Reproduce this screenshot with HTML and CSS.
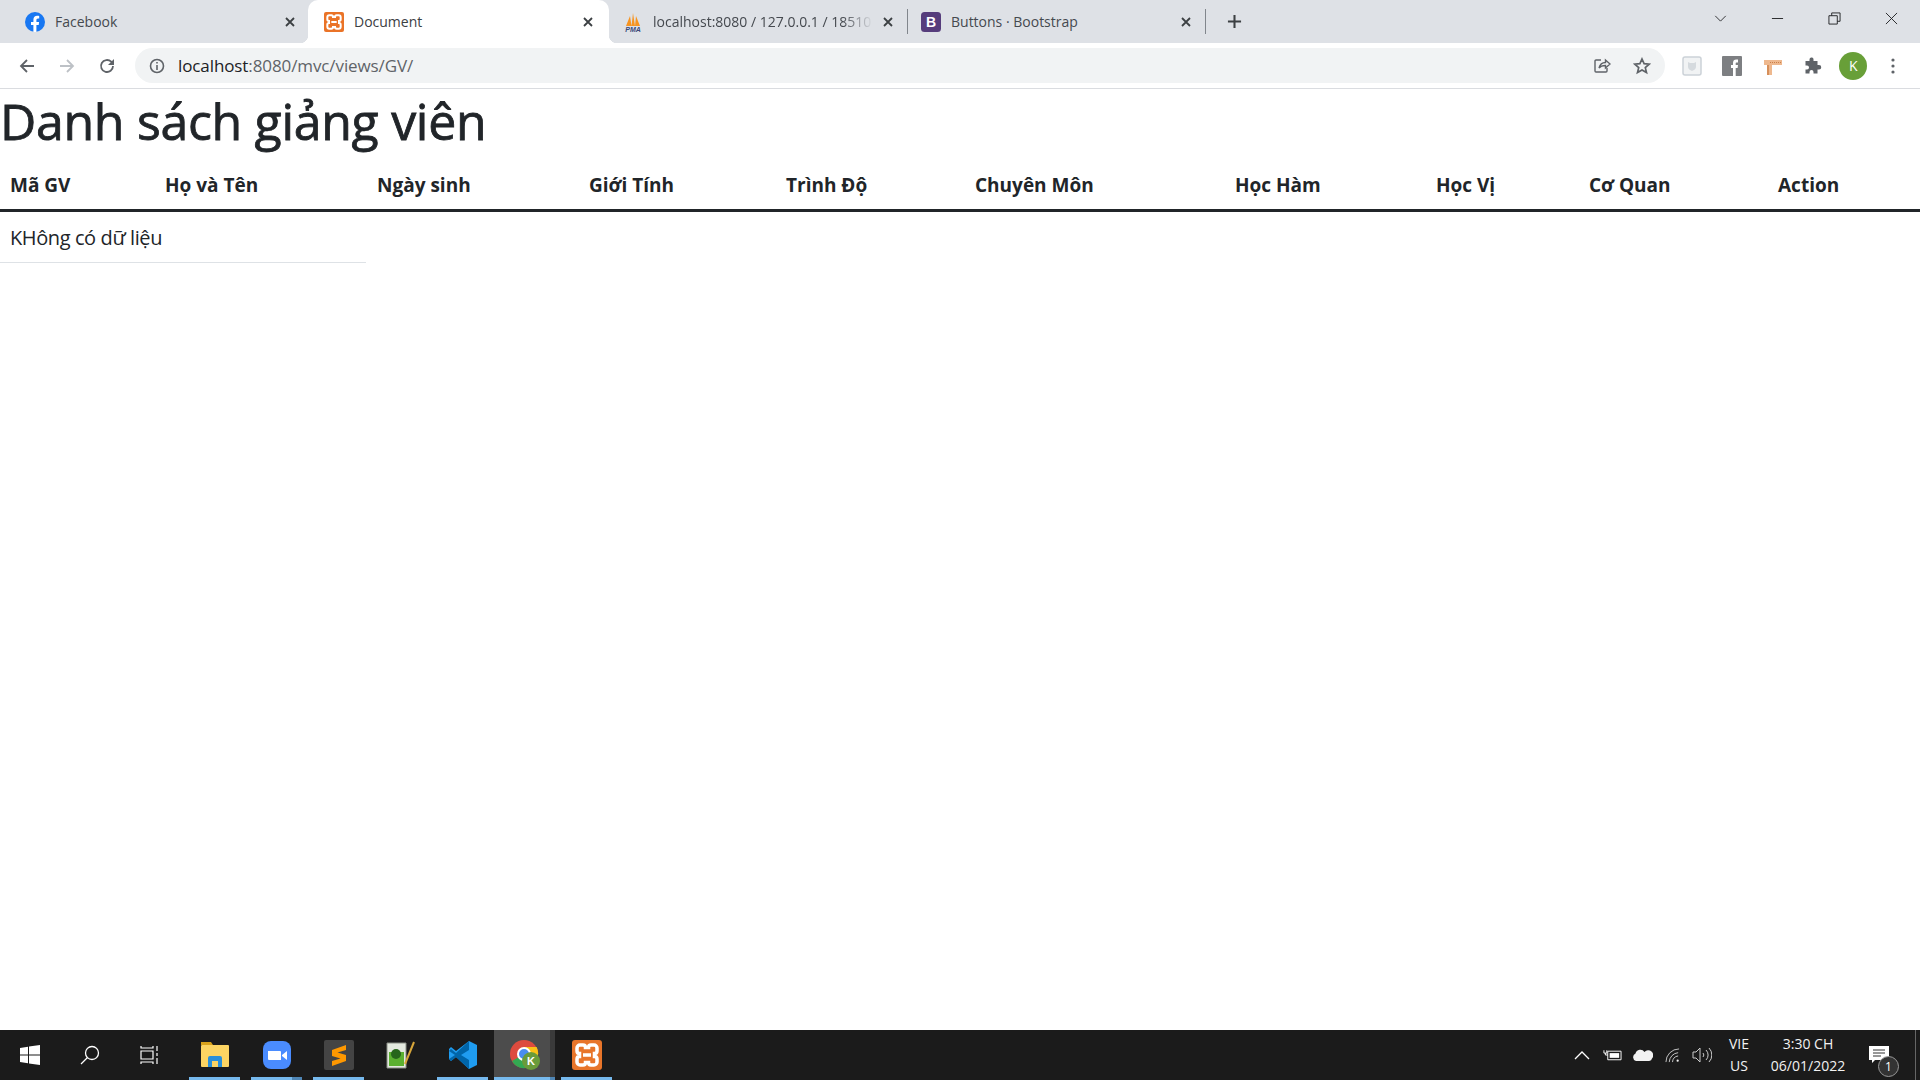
FILE: index.html
```html
<!DOCTYPE html>
<html lang="vi">
<head>
    <meta charset="UTF-8">
    <title>Document</title>
    <link rel="stylesheet" href="styles.css">
</head>
<body>
<div class="chrome">
    <div class="tabstrip">
        <div class="tab">
            <svg class="fav" viewBox="0 0 20 20"><circle cx="10" cy="10" r="10" fill="#1877f2"/><path d="M8.4 20v-7H6v-3h2.400V7.700c0-2.500 1.500-3.900 3.700-3.900 1.100 0 2.100.2 2.100.2v2.400h-1.200c-1.200 0-1.600.8-1.600 1.500V10h2.700l-.4 3h-2.300v7z" fill="#fff"/></svg>
            <span class="tab-title">Facebook</span>
            <svg class="tab-x" viewBox="0 0 10 10"><path d="M1 1l8 8M9 1l-8 8"/></svg>
        </div>
        <div class="tab active">
            <svg class="fav" viewBox="0 0 30 30"><rect width="30" height="30" rx="3" fill="#ea7327"/><path class="xampp" d="M8 5h3c1.500 0 2.500 1 2.500 2.500h3C16.500 6 17.500 5 19 5h3a3 3 0 0 1 3 3v3c0 1.500-1 2.500-2.500 2.500v3c1.500 0 2.500 1 2.500 2.500v3a3 3 0 0 1-3 3h-3c-1.500 0-2.500-1-2.500-2.500h-3c0 1.500-1 2.500-2.500 2.500H8a3 3 0 0 1-3-3v-3c0-1.500 1-2.500 2.500-2.500v-3C6 13.500 5 12.500 5 11V8a3 3 0 0 1 3-3zM11 15h8"/></svg>
            <span class="tab-title">Document</span>
            <svg class="tab-x" viewBox="0 0 10 10"><path d="M1 1l8 8M9 1l-8 8"/></svg>
        </div>
        <div class="tab">
            <svg class="fav" viewBox="0 0 20 20"><path d="M3 14L7 4l1.500 10zM8.500 14L10 1l2 13zM12 14l1-10 4 10z" fill="#f79421"/><text x="10" y="19.500" class="pma">PMA</text></svg>
            <span class="tab-title fade">localhost:8080 / 127.0.0.1 / 18510</span>
            <svg class="tab-x" viewBox="0 0 10 10"><path d="M1 1l8 8M9 1l-8 8"/></svg>
        </div>
        <div class="sep"></div>
        <div class="tab">
            <svg class="fav" viewBox="0 0 20 20"><rect width="20" height="20" rx="3.500" fill="#563d7c"/><text x="10" y="15" class="bs">B</text></svg>
            <span class="tab-title">Buttons · Bootstrap</span>
            <svg class="tab-x" viewBox="0 0 10 10"><path d="M1 1l8 8M9 1l-8 8"/></svg>
        </div>
        <div class="sep"></div>
        <svg class="newtab" viewBox="0 0 16 16"><path d="M8 1v14M1 8h14"/></svg>
        <div class="win-btns">
            <svg class="win chev" viewBox="0 0 14 8"><path d="M1 1l6 6 6-6"/></svg>
            <svg class="win" viewBox="0 0 14 14"><path d="M1 7h12"/></svg>
            <svg class="win" viewBox="0 0 14 14"><path d="M1 4h9v9H1zM4 4V1h9v9h-3"/></svg>
            <svg class="win" viewBox="0 0 14 14"><path d="M1 1l12 12M13 1L1 13"/></svg>
        </div>
    </div>
    <div class="toolbar">
        <svg class="nav" viewBox="0 0 16 16"><path d="M15 8H2M8 2L2 8l6 6"/></svg>
        <svg class="nav off" viewBox="0 0 16 16"><path d="M1 8h13M8 2l6 6-6 6"/></svg>
        <svg class="nav" viewBox="0 0 16 16"><path d="M14 8a6 6 0 1 1-1.800-4.300L14 5.500"/><path class="solid" d="M15 1v6H9z"/></svg>
        <div class="omnibox">
            <svg class="info" viewBox="0 0 16 16"><circle cx="8" cy="8" r="6.500"/><path d="M8 7v5M8 4v1.600"/></svg>
            <span class="url"><b>localhost</b>:8080/mvc/views/GV/</span>
            <svg class="omni-ic" viewBox="0 0 18 18"><path d="M8 3H3a1 1 0 0 0-1 1v10a1 1 0 0 0 1 1h10a1 1 0 0 0 1-1v-3"/><path d="M6 11c1-4 4-5.500 6.500-5.500V3L17 7l-4.500 4V8.500C10 8.500 7.500 9 6 11z"/></svg>
            <svg class="omni-ic star" viewBox="0 0 18 18"><path d="M9 2l2.100 4.700 5.100.5-3.900 3.400 1.200 5L9 13l-4.500 2.600 1.200-5L1.800 7.200l5.100-.5z"/></svg>
        </div>
        <div class="ext-row">
            <svg class="ext" viewBox="0 0 20 20"><rect x="1" y="1" width="18" height="18" rx="2" fill="#f1f3f4" stroke="#ccd2d8" stroke-width="1.500"/><path d="M6 6l2 1h4l2-1v5c0 2-2 3-4 4-2-1-4-2-4-4z" fill="#d5dade"/></svg>
            <svg class="ext" viewBox="0 0 20 20"><rect width="20" height="20" rx="1" fill="#7d7f82"/><path d="M11 20v-8H9V9h2V7c0-2.500 1.300-3.500 3.200-3.500H16v3h-1.300c-.8 0-1 .4-1 1V9H16l-.4 3h-1.900v8z" fill="#fff"/></svg>
            <svg class="ext" viewBox="0 0 20 20"><path d="M1 4h18v5H9v10H4V9H1z" fill="#eeb88e"/><path d="M4 9h2v10H4z" fill="#d68f5a"/><path d="M7 6.500h11" stroke="#c97f48" stroke-dasharray="1 1"/></svg>
            <svg class="ext" viewBox="0 0 20 20"><path class="puzzle" d="M8 1.500a2 2 0 0 1 2.500 2V5h4v4h1.500a2 2 0 0 1 0 4.500h-1.500v4h-4V16a2 2 0 0 0-4 0v1.500h-4v-4H4a2 2 0 0 0 0-4H2.500V5h4V3.500A2 2 0 0 1 8 1.500z"/></svg>
            <div class="avatar">K</div>
            <svg class="dots" viewBox="0 0 4 16"><circle cx="2" cy="2" r="1.600"/><circle cx="2" cy="8" r="1.600"/><circle cx="2" cy="14" r="1.600"/></svg>
        </div>
    </div>
</div>

<main class="page">
    <h1>Danh sách giảng viên</h1>
    <table class="list">
        <colgroup>
            <col class="c1"><col class="c2"><col class="c3"><col class="c4"><col class="c5">
            <col class="c6"><col class="c7"><col class="c8"><col class="c9"><col class="c10">
        </colgroup>
        <thead>
            <tr>
                <th>Mã GV</th><th>Họ và Tên</th><th>Ngày sinh</th><th>Giới Tính</th><th>Trình Độ</th>
                <th>Chuyên Môn</th><th>Học Hàm</th><th>Học Vị</th><th>Cơ Quan</th><th>Action</th>
            </tr>
        </thead>
    </table>
    <div class="empty">KHông có dữ liệu</div>
</main>

<div class="taskbar">
    <svg class="sys" viewBox="0 0 20 20"><path d="M0 3l8-1.200V9.500H0zM9 1.600L20 0v9.500H9zM0 10.500h8v7.700L0 17zM9 10.500h11V20L9 18.400z" fill="#fff"/></svg>
    <svg class="sys" viewBox="0 0 20 20"><circle cx="12" cy="8" r="6.500" fill="none" stroke="#fff" stroke-width="1.300"/><path d="M7.500 12.500L1 19" stroke="#fff" stroke-width="1.300"/></svg>
    <svg class="sys" viewBox="0 0 20 20"><path d="M1 1v2h12V1M1 19v-2h12v2M1 6h12v8H1zM17 1v5M17 8v3M17 13v6" fill="none" stroke="#fff" stroke-width="1.200"/></svg>
    <div class="apps">
        <div class="app run">
            <svg viewBox="0 0 30 30"><path d="M1 2h10l2 3H1z" fill="#d9a21b"/><rect x="1" y="5" width="28" height="22" rx="1" fill="#fcd462"/><path d="M8 27v-9a2 2 0 0 1 2-2h10a2 2 0 0 1 2 2v9h-4v-6h-6v6z" fill="#2a8fd8"/></svg>
        </div>
        <div class="app run split">
            <svg viewBox="0 0 30 30"><rect x="1" y="1" width="28" height="28" rx="8" fill="#4a8cff"/><path d="M6 11h12a1 1 0 0 1 1 1v8H7a1 1 0 0 1-1-1z" fill="#fff"/><path d="M20 15l5-4v9l-5-4z" fill="#fff"/></svg>
        </div>
        <div class="app run">
            <svg viewBox="0 0 30 30"><rect width="30" height="30" rx="2" fill="#444"/><path d="M22 5L8 10v6l8.500 2.500L8 21v5l14-5v-6l-8.500-2.500L22 10z" fill="#ff9800"/></svg>
        </div>
        <div class="app">
            <svg viewBox="0 0 30 30"><path d="M1 3h19v25H1z" fill="#e4e9df" stroke="#8a8f86"/><path d="M3 12h15v14H3z" fill="#5bb030"/><circle cx="10" cy="14" r="5" fill="#26651b"/><path d="M19 24L28 2" stroke="#d8a63a" stroke-width="2"/></svg>
        </div>
        <div class="app run narrow">
            <svg viewBox="0 0 30 30"><path d="M21 1l8 4v20l-8 4-13-12-5 4-2-2v-10l2-2 5 4z" fill="#1f9cf0"/><path d="M21 1v9l-8 5 8 5v9L8 17l-5 4-2-2 6-4-6-4 2-2 5 4z" fill="#0065a9"/></svg>
        </div>
        <div class="app run current split">
            <svg viewBox="0 0 30 30"><circle cx="14" cy="14" r="14" fill="#dd4b3e"/><path d="M14 14L2 21a14 14 0 0 0 14 7z" fill="#33a852"/><path d="M14 7h12.600A14 14 0 0 1 20 26z" fill="#fbc116"/><circle cx="14" cy="14" r="6" fill="#4a8df0" stroke="#fff" stroke-width="2"/><circle cx="21" cy="21" r="9" fill="#6a9b3a"/><text x="21" y="25" class="k">K</text></svg>
        </div>
        <div class="app run">
            <svg viewBox="0 0 30 30"><rect width="30" height="30" rx="3" fill="#e8752a"/><path class="xampp thick" d="M8 5h3c1.500 0 2.500 1 2.500 2.500h3C16.500 6 17.500 5 19 5h3a3 3 0 0 1 3 3v3c0 1.500-1 2.500-2.500 2.500v3c1.500 0 2.500 1 2.500 2.500v3a3 3 0 0 1-3 3h-3c-1.500 0-2.500-1-2.500-2.500h-3c0 1.500-1 2.500-2.500 2.500H8a3 3 0 0 1-3-3v-3c0-1.500 1-2.500 2.500-2.500v-3C6 13.500 5 12.500 5 11V8a3 3 0 0 1 3-3zM11 15h8"/></svg>
        </div>
    </div>
    <div class="tray">
        <svg class="tray-ic up" viewBox="0 0 16 9"><path d="M1 8l7-7 7 7"/></svg>
        <svg class="tray-ic batt" viewBox="0 0 20 12"><path d="M1 1v3h3V1M2.500 4v2H5M5 2h14v9H5z"/><path class="solid" d="M7 4h10v5H7z"/></svg>
        <svg class="tray-ic cloud" viewBox="0 0 21 12"><path class="solid-w" d="M4 12a4 4 0 0 1-.5-7.500A5 5 0 0 1 12.500 3 4.500 4.500 0 0 1 20 9.500 3 3 0 0 1 17 12z"/></svg>
        <svg class="tray-ic wifi" viewBox="0 0 16 16"><path d="M1 15A14 14 0 0 1 15 1M4.500 15A10.500 10.500 0 0 1 14 5M8 15a7 7 0 0 1 6-6.500"/><circle class="solid-w" cx="13.500" cy="13.500" r="1.200"/></svg>
        <svg class="tray-ic vol" viewBox="0 0 20 16"><path d="M1 5h3l4-4v14l-4-4H1zM11 6a3 3 0 0 1 0 4M14 3a7 7 0 0 1 0 10M17 1a10 10 0 0 1 0 14"/></svg>
        <div class="lang"><span>VIE</span><span>US</span></div>
        <div class="clock"><span>3:30 CH</span><span>06/01/2022</span></div>
        <div class="notif">
            <svg viewBox="0 0 20 18"><path d="M0 0h20v14H6l-3 3v-3H0z" fill="#fff"/><path d="M4 4h12M4 7h12M4 10h8" stroke="#333"/></svg>
            <span class="badge">1</span>
        </div>
        <div class="desk"></div>
    </div>
</div>
</body>
</html>
```

FILE: styles.css
```css
*{
    box-sizing: border-box;
}
html,body{
    height: 100%;
}
body{
    margin: 0;
    display: flex;
    flex-direction: column;
    background: #fff;
    color: #212529;
    font-family: "Open Sans", "Noto Sans", sans-serif;
    overflow: hidden;
}

/* browser top */
.chrome{
    flex: none;
}
.tabstrip{
    height: 43px;
    background: #dee1e6;
    display: flex;
    align-items: center;
    padding-left: 9px;
}
.tab{
    position: relative;
    width: 299px;
    align-self: stretch;
    display: flex;
    align-items: center;
    padding: 0 13px 0 16px;
    color: #45494f;
    font-size: 14px;
    flex: none;
}
.tab.active{
    width: 301px;
    margin-right: -2px;
    padding-right: 16px;
    background: #fff;
    color: #3c4043;
    border-radius: 10px 10px 0 0;
}
.tab.active::before,
.tab.active::after{
    content: "";
    position: absolute;
    bottom: 0;
    width: 8px;
    height: 8px;
}
.tab.active::before{
    left: -8px;
    background: radial-gradient(circle at 0 0, transparent 8px, #fff 8.500px);
}
.tab.active::after{
    right: -8px;
    background: radial-gradient(circle at 100% 0, transparent 8px, #fff 8.500px);
}
.fav{
    width: 20px;
    height: 20px;
    flex: none;
    margin-right: 10px;
}
.xampp{
    fill: none;
    stroke: #fff;
    stroke-width: 3;
}
.xampp.thick{
    stroke-width: 3.500;
}
.pma{
    font: italic bold 7px "Liberation Sans", sans-serif;
    fill: #3b4a7a;
    text-anchor: middle;
}
.bs{
    font: bold 14px "Liberation Sans", sans-serif;
    fill: #fff;
    text-anchor: middle;
}
.tab-title{
    flex: 1;
    white-space: nowrap;
    overflow: hidden;
    margin-bottom: 1px;
}
.tab-title.fade{
    -webkit-mask-image: linear-gradient(to right, #000 86%, transparent);
    mask-image: linear-gradient(to right, #000 86%, transparent);
}
.tab-x{
    width: 10px;
    height: 10px;
    flex: none;
    margin-left: 10px;
    fill: none;
    stroke: #3c4043;
    stroke-width: 1.800;
}
.sep{
    width: 1px;
    height: 25px;
    background: #81868c;
    flex: none;
    margin: 0 -3px 0 1px;
}
.newtab{
    width: 15px;
    height: 15px;
    margin-left: 24px;
    fill: none;
    stroke: #3c4043;
    stroke-width: 2.200;
}
.win-btns{
    margin-left: auto;
    display: flex;
    align-items: center;
    align-self: flex-start;
    height: 36px;
    padding-right: 22px;
    gap: 44px;
}
.win{
    width: 13px;
    height: 13px;
    fill: none;
    stroke: #202124;
    stroke-width: 1;
}
.win.chev{
    height: 7px;
}

.toolbar{
    height: 46px;
    display: flex;
    align-items: center;
    padding-left: 19px;
    border-bottom: 1px solid #dadce0;
}
.nav{
    width: 16px;
    height: 16px;
    margin-right: 24px;
    flex: none;
    fill: none;
    stroke: #5f6368;
    stroke-width: 1.800;
}
.nav.off{
    stroke: #bdc1c6;
}
.nav .solid{
    fill: #5f6368;
    stroke: none;
}
.omnibox{
    width: 1530px;
    height: 35px;
    margin-left: -4px;
    background: #f1f3f4;
    border-radius: 18px;
    display: flex;
    align-items: center;
    padding: 0 14px;
    flex: none;
}
.info{
    width: 16px;
    height: 16px;
    fill: none;
    stroke: #5f6368;
    stroke-width: 1.600;
    margin-right: 13px;
}
.url{
    flex: 1;
    font-size: 17px;
    color: #5f6368;
    letter-spacing: -.1px;
}
.url b{
    font-weight: 400;
    color: #202124;
}
.omni-ic{
    width: 18px;
    height: 18px;
    fill: none;
    stroke: #5f6368;
    stroke-width: 1.400;
    margin-left: 22px;
}
.omni-ic.star{
    stroke-width: 1.700;
}
.ext-row{
    display: flex;
    align-items: center;
    margin-left: 17px;
}
.ext{
    width: 20px;
    height: 20px;
    margin-right: 20.300px;
    flex: none;
}
.puzzle{
    fill: #5f6368;
}
.avatar{
    width: 28px;
    height: 28px;
    border-radius: 50%;
    background: #689f38;
    color: #fff;
    font-size: 14px;
    line-height: 28px;
    text-align: center;
    margin: 0 24px 0 -4px;
}
.dots{
    width: 4px;
    height: 16px;
    fill: #5f6368;
}

/* page */
.page{
    flex: 1;
    min-height: 0;
}
h1{
    margin: 0 0 8px;
    font-size: 50px;
    line-height: 64px;
    font-weight: 500;
    letter-spacing: -.3px;
    -webkit-text-stroke: .8px #212529;
}
.list{
    width: 100%;
    border-collapse: collapse;
    table-layout: fixed;
}
.list th{
    padding: 10px 10px 10px;
    text-align: left;
    font-size: 19px;
    line-height: 28px;
    font-weight: 700;
    border-bottom: 3px solid #212529;
}
.c1{ width: 155px; }
.c2,.c3{ width: 212px; }
.c4{ width: 197px; }
.c5,.c9{ width: 189px; }
.c6{ width: 260px; }
.c7{ width: 201px; }
.c8{ width: 153px; }
.c10{ width: 152px; }
.empty{
    width: 366px;
    padding: 12px 10px 10px;
    font-size: 20px;
    line-height: 28px;
    letter-spacing: -.4px;
    border-bottom: 1px solid #dee2e6;
}

/* taskbar */
.taskbar{
    flex: none;
    height: 50px;
    background: #1b1b1b;
    display: flex;
    align-items: center;
    padding-left: 20px;
    color: #fff;
}
.sys{
    width: 20px;
    height: 20px;
    margin-right: 40px;
    flex: none;
}
.apps{
    display: flex;
    height: 100%;
    margin-left: -11px;
}
.app{
    width: 51px;
    height: 100%;
    margin-right: 11px;
    padding-top: 10px;
    display: flex;
    justify-content: center;
}
.app.narrow{
    margin-right: 6px;
}
.app svg{
    width: 30px;
    height: 30px;
}
.app.run{
    background: linear-gradient(#76b9ed, #76b9ed) bottom / 100% 3px no-repeat;
}
.app.run.split{
    background: linear-gradient(to right, #76b9ed 80%, #4f86b5 80%) bottom / 100% 3px no-repeat;
}
.app.current{
    width: 61px;
    margin-right: 6px;
}
.app.run.current{
    background:
        linear-gradient(to right, #76b9ed 92%, #4f86b5 92%) bottom / 100% 3px no-repeat,
        linear-gradient(to right, #4c4c4c 92%, #3a3a3a 92%);
}
.k{
    font: bold 11px "Liberation Sans", sans-serif;
    fill: #fff;
    text-anchor: middle;
}
.tray{
    margin-left: auto;
    display: flex;
    align-items: center;
    height: 100%;
}
.tray-ic{
    fill: none;
    stroke: #fff;
    stroke-width: 1;
    flex: none;
}
.tray-ic.up{ width: 16px; height: 9px; margin-right: 13px; stroke-width: 1.300; }
.tray-ic.batt{ width: 19px; height: 12px; margin-right: 10px; }
.tray-ic.cloud{ width: 21px; height: 12px; margin-right: 12px; }
.tray-ic.wifi{ width: 15px; height: 15px; margin-right: 12px; stroke: #ccc; }
.tray-ic.vol{ width: 20px; height: 16px; margin-right: 12px; stroke: #ccc; }
.tray-ic .solid{ fill: #fff; stroke: none; }
.tray-ic .solid-w{ fill: #f2f2f2; stroke: none; }
.lang,.clock{
    display: flex;
    flex-direction: column;
    align-items: center;
    font-size: 14px;
    line-height: 22px;
    color: #f2f2f2;
    flex: none;
}
.lang{
    width: 30px;
    margin-right: 15px;
}
.clock{
    width: 78px;
    margin-right: 22px;
}
.notif{
    position: relative;
    width: 20px;
    height: 18px;
    margin-right: 26px;
    flex: none;
}
.notif svg{
    width: 20px;
    height: 18px;
    display: block;
}
.badge{
    position: absolute;
    left: 9px;
    top: 10px;
    width: 21px;
    height: 21px;
    border: 1px solid #999;
    border-radius: 50%;
    background: #333;
    font-size: 12px;
    line-height: 19px;
    text-align: center;
}
.desk{
    width: 5px;
    height: 100%;
    border-left: 1px solid #666;
}
```
